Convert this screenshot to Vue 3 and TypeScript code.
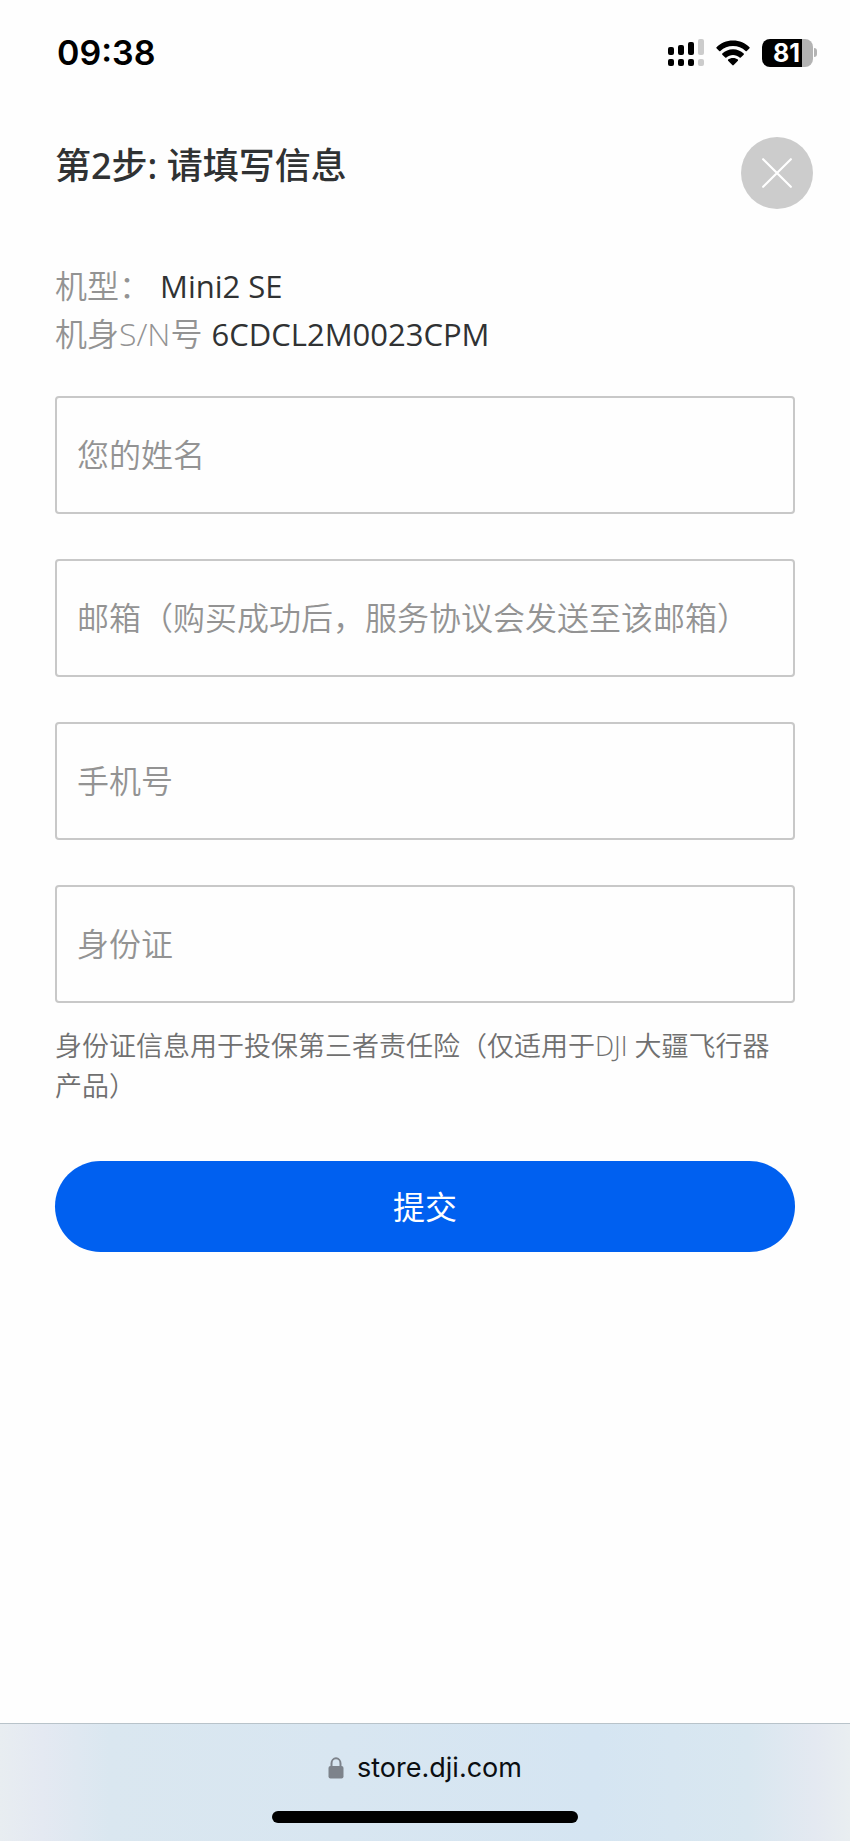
<script setup lang="ts">
import { reactive } from 'vue'

interface Field {
  id: 'name' | 'email' | 'phone' | 'idCard'
  type: string
  placeholder: string
}

const fields: Field[] = [
  { id: 'name', type: 'text', placeholder: '您的姓名' },
  { id: 'email', type: 'email', placeholder: '邮箱（购买成功后，服务协议会发送至该邮箱）' },
  { id: 'phone', type: 'tel', placeholder: '手机号' },
  { id: 'idCard', type: 'text', placeholder: '身份证' },
]

const form = reactive({ name: '', email: '', phone: '', idCard: '' })
</script>

<template>
  <div class="screen">
    <div class="status">
      <time class="clock">09:38</time>
      <div class="indicators">
        <svg class="signal" viewBox="0 0 36 28" aria-hidden="true">
          <rect x="0" y="8" width="6" height="8" rx="2" />
          <rect x="10" y="6" width="6" height="10" rx="2" />
          <rect x="20" y="3" width="6" height="13" rx="2" />
          <rect class="faint" x="30" y="0" width="6" height="16" rx="2" />
          <rect x="0" y="20" width="6" height="7" rx="2" />
          <rect x="10" y="20" width="6" height="7" rx="2" />
          <rect x="20" y="20" width="6" height="7" rx="2" />
          <rect class="faint" x="30" y="20" width="6" height="7" rx="2" />
        </svg>
        <svg class="wifi" viewBox="0 0 34 26" aria-hidden="true">
          <path d="M17 0.5C23.6 0.5 29.4 3 33.5 7.2Q34 7.8 33.5 8.3L30.8 11Q30.2 11.5 29.6 11C26.2 7.7 21.8 6 17 6S7.8 7.7 4.4 11Q3.800 11.500 3.200 11L.5 8.300Q0 7.800 .5 7.200C4.600 3 10.400 .5 17 .5Z" />
          <path d="M17 9.300C21.200 9.300 24.900 10.900 27.700 13.500Q28.200 14.100 27.700 14.700L24.800 17.400Q24.200 17.900 23.600 17.400C21.800 15.800 19.500 14.900 17 14.900S12.200 15.800 10.400 17.400Q9.800 17.900 9.200 17.400L6.300 14.700Q5.800 14.100 6.300 13.500C9.100 10.900 12.800 9.300 17 9.300Z" />
          <path d="M17 17.900C19 17.900 20.700 18.500 21.900 19.500Q22.400 20.100 21.900 20.700L17.700 25.100Q17 25.800 16.300 25.100L12.100 20.700Q11.600 20.100 12.100 19.500C13.300 18.500 15 17.900 17 17.900Z" />
        </svg>
        <div class="battery">
          <span class="cell">81</span>
          <span class="nub"></span>
        </div>
      </div>
    </div>

    <main class="content">
      <header class="head">
        <h1>第2步: 请填写信息</h1>
        <button class="close" type="button" aria-label="关闭">
          <svg viewBox="0 0 30 30" aria-hidden="true">
            <path d="M2 2L28 28M28 2L2 28" />
          </svg>
        </button>
      </header>

      <dl class="device">
        <div class="row">
          <dt>机型：</dt>
          <dd>Mini2 SE</dd>
        </div>
        <div class="row">
          <dt>机身S/N号</dt>
          <dd>6CDCL2M0023CPM</dd>
        </div>
      </dl>

      <form @submit.prevent>
        <div class="fields">
          <input
            v-for="field in fields"
            :id="field.id"
            :key="field.id"
            v-model="form[field.id]"
            :type="field.type"
            :placeholder="field.placeholder"
            :aria-label="field.placeholder"
          />
        </div>
        <p class="note">身份证信息用于投保第三者责任险（仅适用于DJI 大疆飞行器产品）</p>
        <button class="submit" type="submit">提交</button>
      </form>
    </main>

    <footer class="browser">
      <a class="address" href="#">
        <svg viewBox="0 0 16 22" aria-hidden="true">
          <rect x="0.500" y="9" width="15" height="12.500" rx="2" />
          <path d="M3.500 10V6.500a4.500 5.200 0 0 1 9 0V10" />
        </svg>
        <span>store.dji.com</span>
      </a>
      <div class="home"></div>
    </footer>
  </div>
</template>

<style>
body {
  margin: 0;
  background: #fefefe;
}
</style>

<style scoped>
.screen {
  display: flex;
  flex-direction: column;
  min-height: 100vh;
  box-sizing: border-box;
  background: #fefefe;
  font-family: "Open Sans", "Noto Sans CJK SC", sans-serif;
}

.status {
  display: flex;
  align-items: center;
  justify-content: space-between;
  height: 105px;
  padding: 0 33px 0 57px;
}

.clock {
  font: 600 34px/40px Inter, sans-serif;
  color: #000;
}

.indicators {
  display: flex;
  align-items: center;
  gap: 12px;
}

.signal {
  width: 36px;
  height: 28px;
}

.signal .faint {
  fill: #ccc;
}

.wifi {
  width: 34px;
  height: 26px;
}

.battery {
  display: flex;
  align-items: center;
  gap: 1px;
}

.cell {
  width: 51px;
  height: 28px;
  box-sizing: border-box;
  padding-right: 2px;
  border-radius: 8px;
  background: linear-gradient(to right, #000 40px, #b3b3b3 40px);
  color: #fff;
  font: 700 25px/28px Inter, sans-serif;
  text-align: center;
}

.nub {
  width: 3px;
  height: 9px;
  border-radius: 0 4px 4px 0;
  background: #b3b3b3;
}

.content {
  flex: 1;
  padding: 32px 55px 0;
}

.head {
  display: flex;
  align-items: flex-start;
  justify-content: space-between;
  margin-right: -18px;
}

h1 {
  margin: 0;
  color: #303233;
  font-family: "Noto Sans", "Noto Sans CJK SC", sans-serif;
  font-size: 36px;
  font-weight: 500;
  line-height: 58px;
}

.close {
  display: grid;
  place-items: center;
  width: 72px;
  height: 72px;
  padding: 0;
  border: 0;
  border-radius: 50%;
  background: #ccc;
}

.close svg {
  width: 32px;
  height: 32px;
  fill: none;
  stroke: #fff;
  stroke-width: 2;
  stroke-linecap: round;
}

.device {
  margin: 53px 0 38px;
  font-size: 32px;
  font-weight: 350;
  line-height: 48px;
}

.row {
  display: flex;
  gap: 9px;
}

dt {
  color: #939393;
}

dd {
  margin: 0;
  color: #303233;
  font-size: 31px;
  font-weight: 400;
}

.fields {
  display: grid;
  gap: 45px;
}

input {
  width: 100%;
  height: 118px;
  box-sizing: border-box;
  padding: 0 20px 4px;
  border: 2px solid #c8c8c8;
  border-radius: 4px;
  background: #fefefe;
  color: #303233;
  font: 350 32px/48px "Noto Sans CJK SC", sans-serif;
}

input::placeholder {
  color: #939393;
  opacity: 1;
}

.note {
  margin: 23px 0 55px;
  color: #707070;
  font-size: 27px;
  font-weight: 350;
  line-height: 40px;
}

.submit {
  display: block;
  width: 100%;
  height: 91px;
  padding: 0 0 4px;
  border: 0;
  border-radius: 46px;
  background: #0060f0;
  color: #fff;
  font: 400 32px/48px "Noto Sans CJK SC", sans-serif;
}

.browser {
  display: flex;
  flex-direction: column;
  align-items: center;
  justify-content: space-between;
  height: 118px;
  box-sizing: border-box;
  padding: 26px 0 18px;
  border-top: 1px solid #b8c3ca;
  background: linear-gradient(to right, #e8edf1 0, #e4e9f2 5%, #dae7f0 13%, #d8e6f1 40%, #d5e5f2 70%, #d9e7f0 88%, #e4e9f1 96%, #e9eef1 100%);
}

.address {
  display: flex;
  align-items: center;
  gap: 13px;
  color: #0b0e11;
  font: 400 27px/36px Inter, sans-serif;
  text-decoration: none;
}

.address svg {
  width: 16px;
  height: 22px;
  fill: #7d838b;
}

.address path {
  fill: none;
  stroke: #7d838b;
  stroke-width: 2;
}

.home {
  width: 36%;
  height: 12px;
  border-radius: 6px;
  background: #000;
}
</style>
